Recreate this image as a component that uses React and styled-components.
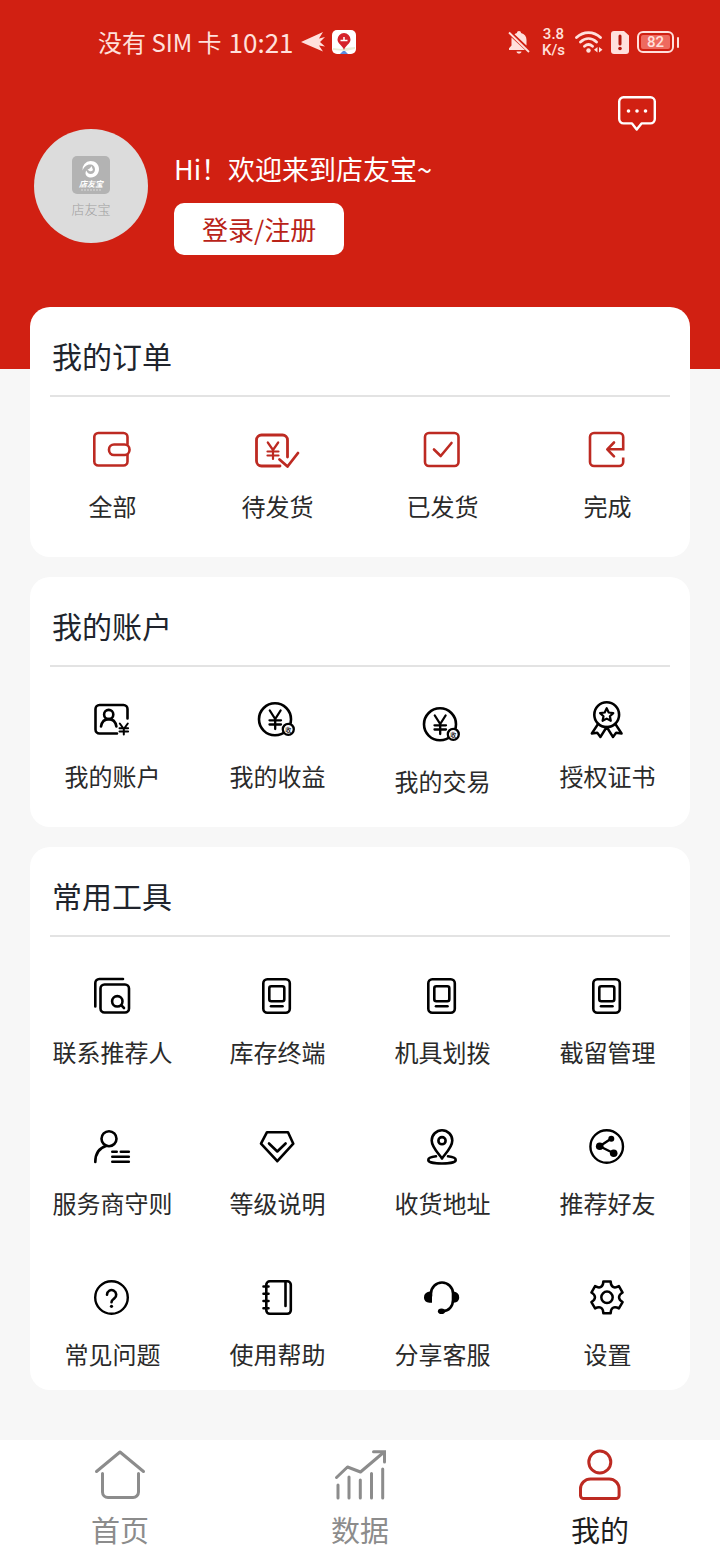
import React, { useState } from "react";
import styled, { createGlobalStyle } from "styled-components";

const GlobalStyle = createGlobalStyle`
  :root {
    --red-color: #d12012;
    --icon-red: #bd2a22;
    --white-color: #ffffff;
    --status-color: #ffe0dc;
    --text-color: #2a2a2a;
    --grey-color: #8c8c8c;
    --line-color: #e3e3e3;
    --page-color: #f7f7f7;
  }

  * {
    box-sizing: border-box;
  }

  body {
    margin: 0;
    background: var(--page-color);
    color: var(--text-color);
    font-family: "Noto Sans CJK SC", "Noto Sans", sans-serif;
  }

  button {
    border: none;
    background: none;
    padding: 0;
    color: inherit;
    font: inherit;
    cursor: pointer;
  }
`;

// item icons, all drawn on the same 45px board
const Icon = ({ children, height = 45, color = "#000", width = 2.6 }) => (
  <svg
    width="45"
    height={height}
    viewBox={`0 ${45 - height} 45 ${height}`}
    fill="none"
    stroke={color}
    strokeWidth={width}
    strokeLinecap="round"
    strokeLinejoin="round"
    aria-hidden="true"
  >
    {children}
  </svg>
);

const RED = "var(--icon-red)";

const WalletIcon = () => (
  <Icon color={RED}>
    <path d="M37.5 16V9a4 4 0 0 0-4-4H8.300a4 4 0 0 0-4 4v24.500a4 4 0 0 0 4 4h25.200a4 4 0 0 0 4-4V27" />
    <rect x="19" y="16.500" width="20.500" height="10.500" rx="5" />
  </Icon>
);

const PendingIcon = () => (
  <Icon color={RED} width={2.8}>
    <path d="M32.5 29V12a5 5 0 0 0-5-5h-21a5 5 0 0 0-5 5v21a5 5 0 0 0 5 5H25" />
    <path d="M24.5 31.500l8 7L43 25" />
    <path d="M12.8 14.500l5.200 7.500 5.200-7.500M18 22v9M12.500 23.500h11M12.500 27.500h11" strokeWidth="2.200" />
  </Icon>
);

const ShippedIcon = () => (
  <Icon color={RED}>
    <rect x="5" y="5" width="33.500" height="33" rx="4" />
    <path d="M14 21.500l6.700 6.500L31.500 15" />
  </Icon>
);

const DoneIcon = () => (
  <Icon color={RED}>
    <path
      d="M22 21.300h16.200V9a4 4 0 0 0-4-4H9a4 4 0 0 0-4 4v25a4 4 0 0 0 4 4h25.200a4 4 0 0 0 4-4v-4.500"
      strokeLinecap="butt"
      strokeLinejoin="miter"
    />
    <path d="M29 14.500l-6.700 6.800 6.700 7" />
  </Icon>
);

const AccountIcon = () => (
  <Icon>
    <path d="M37.500 20.500V11a4 4 0 0 0-4-4h-24a4 4 0 0 0-4 4v20.500a4 4 0 0 0 4 4H27" />
    <circle cx="18.700" cy="16.500" r="4.600" />
    <path d="M11 28.500c.8-4.500 3.500-7.400 7.700-7.400s6.900 2.900 7.700 7.400" />
    <path d="M29.800 25.500l4 5.500 4-5.500M33.800 31v5.500M29.500 30.200h8.600M29.500 33.400h8.600" strokeWidth="2" />
  </Icon>
);

const CoinIcon = ({ height }) => (
  <Icon height={height}>
    <circle cx="20" cy="21.300" r="16" />
    <path d="M14.800 12.500l5.400 8.500 5.400-8.500M20.200 21v10M14.500 22.300h11.500M14.500 26.500h11.500" strokeWidth="2.300" />
    <circle cx="33.300" cy="31.300" r="5.500" fill="#fff" strokeWidth="2.300" />
    <text
      x="33.300"
      y="33.500"
      textAnchor="middle"
      fontSize="6"
      fontWeight="500"
      fill="#000"
      stroke="none"
    >
      收
    </text>
  </Icon>
);

const CertificateIcon = () => (
  <Icon>
    <circle cx="21.700" cy="16.700" r="12.400" />
    <path
      d="M21.700 10.200l2 4.300 4.600.6-3.400 3.200.9 4.500-4.100-2.200-4.100 2.200.9-4.500-3.400-3.200 4.600-.6z"
      strokeWidth="2.200"
    />
    <path d="M12.700 26.500l-5.900 9 5.500-.7 3.100 4.200 6.300-10 6.300 10 3.100-4.200 5.500.7-5.900-9" strokeWidth="2.400" />
  </Icon>
);

const ReferrerIcon = () => (
  <Icon>
    <path d="M5.300 32.500V9a4 4 0 0 1 4-4H33" />
    <rect x="10.500" y="10.500" width="28.500" height="28" rx="4" />
    <circle cx="27.300" cy="27.300" r="5.200" />
    <path d="M31.200 31.200l2.800 2.800" />
  </Icon>
);

const TerminalIcon = () => (
  <Icon>
    <rect x="8.300" y="5.300" width="26.500" height="33.500" rx="4" />
    <rect x="14.300" y="12.300" width="15" height="15" rx="2" />
    <path d="M16 32.200h11.500" />
  </Icon>
);

const RulesIcon = () => (
  <Icon>
    <circle cx="19" cy="13.700" r="7.500" />
    <path d="M16 21C9.500 23 5.300 28.500 5.300 37" />
    <path d="M22.300 26.700h4.400M30.800 26.700h8M22.300 31.700h16.500M22.300 36.700h16.500" />
  </Icon>
);

const LevelIcon = () => (
  <Icon>
    <path d="M12 7.200h21l5.300 11.500L22.300 36.200 6 18.700z" />
    <path d="M14 18.500l8.300 8 8.300-8" />
  </Icon>
);

const AddressIcon = () => (
  <Icon>
    <path d="M22 33.500c-2-3.500-10.300-10.800-10.300-18a10.300 10.300 0 0 1 20.600 0c0 7.200-8.300 14.500-10.300 18z" />
    <circle cx="22" cy="15.700" r="3.600" />
    <path d="M16 31.300c-4.500.5-7.700 1.800-7.700 3.600 0 2.200 6 3.600 13.700 3.600s13.700-1.400 13.700-3.600c0-1.800-3.200-3.100-7.700-3.600" />
  </Icon>
);

const ShareIcon = () => (
  <Icon width={2.4}>
    <circle cx="21.700" cy="21.500" r="16.300" />
    <path d="M26 13.700L14.700 21.300l14 7" />
    <g fill="#000" stroke="none">
      <circle cx="26.300" cy="13.700" r="3" />
      <circle cx="14.700" cy="21.300" r="3.800" />
      <circle cx="28.700" cy="28.300" r="3.800" />
    </g>
  </Icon>
);

const QuestionIcon = () => (
  <Icon width={2.4}>
    <circle cx="21.500" cy="21.500" r="16.300" />
    <path d="M17 18.700a4.600 4.600 0 1 1 7.300 3.700c-1.600 1.200-2.800 1.900-2.800 3.800" strokeWidth="2.600" />
    <circle cx="21.500" cy="30.300" r="1.600" fill="#000" stroke="none" />
  </Icon>
);

const ManualIcon = () => (
  <Icon>
    <rect x="11.300" y="5.300" width="24.500" height="32.500" rx="3.500" />
    <path d="M30.500 6v24M8.500 10.500h5M8.500 17.700h5M8.500 25h5M8.500 32.300h5" />
  </Icon>
);

const ServiceIcon = () => (
  <Icon>
    <path d="M11 20V17.500a11 11 0 0 1 22 0V24c0 6-4 11-10.500 11.300" />
    <path
      d="M12 15.500v11.200H9.500C6 26.700 4 24.500 4 21.300s2-5.300 5.500-5.800zM32 15.500v11.200h1.800c3.500 0 5.400-2.200 5.400-5.400s-1.900-5.300-5.400-5.800z"
      fill="#000"
      stroke="none"
    />
    <ellipse cx="21.500" cy="35.300" rx="3.600" ry="2.800" fill="#000" stroke="none" />
  </Icon>
);

// point on the gear outline, angle in degrees
const gearPoint = (angle, radius) => {
  const rad = (angle * Math.PI) / 180;
  return `${(22 + radius * Math.cos(rad)).toFixed(2)} ${(21.3 + radius * Math.sin(rad)).toFixed(2)}`;
};

const gearPath =
  [0, 1, 2, 3, 4, 5]
    .map((i) => {
      const a = i * 60 - 90;
      return `${i === 0 ? "M" : "L"}${gearPoint(a - 13, 16.3)} L${gearPoint(a + 13, 16.3)} C${gearPoint(
        a + 20,
        11
      )} ${gearPoint(a + 40, 11)} ${gearPoint(a + 47, 16.3)}`;
    })
    .join(" ") + "Z";

const SettingsIcon = () => (
  <Icon width={2.5}>
    <path d={gearPath} />
    <circle cx="22" cy="21.300" r="5.700" />
  </Icon>
);

const NavIcon = ({ children }) => (
  <svg
    width="54"
    height="54"
    viewBox="0 0 54 54"
    fill="none"
    stroke="currentColor"
    strokeWidth="3"
    strokeLinecap="round"
    strokeLinejoin="round"
    aria-hidden="true"
  >
    {children}
  </svg>
);

const HomeIcon = () => (
  <NavIcon>
    <path d="M3.500 23.500L27 4l23.500 19.500" />
    <path d="M9.500 25.500V44a5.500 5.500 0 0 0 5.500 5.500h25a5.500 5.500 0 0 0 5.500-5.500V25.500" />
  </NavIcon>
);

const DataIcon = () => (
  <NavIcon>
    <path d="M3.500 29.500L14.500 19l13 5L50.500 4.500" />
    <path d="M40.500 3.800h11V14" strokeLinejoin="miter" />
    <path d="M5 37v13M16 29v21M27.300 32v18M38.500 25.500V50M49.700 21v29" />
  </NavIcon>
);

const MineIcon = () => (
  <NavIcon>
    <circle cx="26.800" cy="14" r="11" />
    <path d="M17.500 31h18.600a10 10 0 0 1 10 10v6.500a3 3 0 0 1-3 3H10.500a3 3 0 0 1-3-3V41a10 10 0 0 1 10-10z" />
  </NavIcon>
);

const orders = [
  { label: "全部", icon: <WalletIcon /> },
  { label: "待发货", icon: <PendingIcon /> },
  { label: "已发货", icon: <ShippedIcon /> },
  { label: "完成", icon: <DoneIcon /> },
];

const account = [
  { label: "我的账户", icon: <AccountIcon /> },
  { label: "我的收益", icon: <CoinIcon /> },
  { label: "我的交易", icon: <CoinIcon height={50} /> },
  { label: "授权证书", icon: <CertificateIcon /> },
];

const tools = [
  { label: "联系推荐人", icon: <ReferrerIcon /> },
  { label: "库存终端", icon: <TerminalIcon /> },
  { label: "机具划拨", icon: <TerminalIcon /> },
  { label: "截留管理", icon: <TerminalIcon /> },
  { label: "服务商守则", icon: <RulesIcon /> },
  { label: "等级说明", icon: <LevelIcon /> },
  { label: "收货地址", icon: <AddressIcon /> },
  { label: "推荐好友", icon: <ShareIcon /> },
  { label: "常见问题", icon: <QuestionIcon /> },
  { label: "使用帮助", icon: <ManualIcon /> },
  { label: "分享客服", icon: <ServiceIcon /> },
  { label: "设置", icon: <SettingsIcon /> },
];

const tabs = [
  { id: "home", label: "首页", icon: <HomeIcon /> },
  { id: "data", label: "数据", icon: <DataIcon /> },
  { id: "mine", label: "我的", icon: <MineIcon /> },
];

const StatusBar = () => (
  <StatusStyles>
    <div className="left">
      <span>没有 SIM 卡</span>
      <time>10:21</time>
      <svg width="24" height="20" viewBox="0 0 24 20" fill="currentColor" aria-hidden="true">
        <path d="M0 10L22 0l-4 6.500L24 5l-5 5 5 4.500-6-1 4 6z" />
      </svg>
      <svg width="24" height="24" viewBox="0 0 24 24" aria-hidden="true">
        <rect width="24" height="24" rx="5" fill="#fff" />
        <path d="M1 18l8 1 4-1 10-1v2l-9 2-13-1z" fill="#e9edd8" />
        <path d="M12 3a6.500 6.500 0 0 0-6.500 6.500C5.500 14 10.500 15 12 20c1.500-5 6.500-6 6.500-10.500A6.500 6.500 0 0 0 12 3z" fill="#d5232b" />
        <path d="M8.500 10.500h7M12 7v3.500" stroke="#fff" strokeWidth="1.500" />
        <path d="M8 24l3-3h2l3 3z" fill="#5a8de0" />
      </svg>
    </div>
    <div className="right">
      <svg width="22" height="24" viewBox="0 0 22 24" fill="currentColor" aria-hidden="true">
        <path d="M3.500 7.500L17 20H1v-1.800l2.500-2.700zM6.500 4.200C7.300 3.500 8 3.200 9 3c0-1.300.7-2 2-2s2 .7 2 2c3.700.9 5.500 3.500 5.500 7v5.500z" />
        <path d="M8.500 21.500h5c-.3 1.400-1.200 2-2.500 2s-2.200-.6-2.500-2z" />
        <path d="M1 2.500l20 19.500" stroke="currentColor" strokeWidth="1.800" />
      </svg>
      <div className="speed">
        <span>3.8</span>
        <span>K/s</span>
      </div>
      <svg
        width="28"
        height="24"
        viewBox="0 0 28 24"
        fill="none"
        stroke="currentColor"
        strokeWidth="2.800"
        strokeLinecap="round"
        aria-hidden="true"
      >
        <path d="M1.500 7.500c7-6.500 17-6.500 24 0M5.500 12c5-4.500 11-4.500 16 0M9.500 16.300c2.500-2.200 5.500-2.200 8 0" />
        <circle cx="13.500" cy="20.500" r="2.200" fill="currentColor" stroke="none" />
        <path d="M22.500 17v5.500L19 19.800zM24 17v5.500l3.500-2.700z" fill="currentColor" stroke="none" />
      </svg>
      <svg width="18" height="23" viewBox="0 0 18 23" aria-hidden="true">
        <path d="M3 0h10l5 4.500V20a3 3 0 0 1-3 3H3a3 3 0 0 1-3-3V3a3 3 0 0 1 3-3z" fill="currentColor" />
        <path d="M9 5v8" stroke="#b3180d" strokeWidth="3" strokeLinecap="round" />
        <circle cx="9" cy="17.500" r="1.800" fill="#b3180d" />
      </svg>
      <div className="battery">
        <span>82</span>
      </div>
    </div>
  </StatusStyles>
);

const Avatar = () => (
  <AvatarStyles>
    <svg width="38" height="38" viewBox="0 0 38 38" aria-hidden="true">
      <rect width="38" height="38" rx="5" fill="#b3b3b3" />
      <path
        d="M10.500 14.500A8.500 8.500 0 0 1 18.500 5c5 0 8.500 3.500 8.500 8s-3.500 8.500-8 8.500c-3.500 0-5.500-2-5.500-4.500 0-1 .3-1.800.8-2.500 1 2.500 2.500 3.500 4.200 3.500 2.700 0 4.500-2 4.500-4.500 0-3-2-5-5-5-3.500 0-6 2.500-7.500 6z"
        fill="#fff"
      />
      <path d="M15.500 13.500c2-.5 3-1.500 4-3.500l1.500 4c-1.500 1.800-3.500 1.800-5.500-.5z" fill="#fff" />
      <text x="19" y="31" textAnchor="middle" fontSize="8" fontWeight="700" fontStyle="italic" fill="#fff">
        店友宝
      </text>
      <path d="M9 34h21" stroke="#dcdcdc" strokeWidth="1" strokeDasharray="2 1" />
    </svg>
    <span>店友宝</span>
  </AvatarStyles>
);

const Section = ({ title, items, roomy }) => (
  <Card>
    <h2>{title}</h2>
    <Grid $roomy={roomy}>
      {items.map((item) => (
        <li key={item.label}>
          <button>
            {item.icon}
            <span>{item.label}</span>
          </button>
        </li>
      ))}
    </Grid>
  </Card>
);

const App = () => {
  const [active, setActive] = useState("mine");

  return (
    <>
      <GlobalStyle />
      <Page>
        <Header>
          <StatusBar />
          <Profile>
            <Avatar />
            <div className="welcome">
              <p>Hi！欢迎来到店友宝~</p>
              <LoginButton>登录/注册</LoginButton>
            </div>
            <button className="message" aria-label="消息">
              <svg
                width="40"
                height="38"
                viewBox="0 0 40 38"
                fill="none"
                stroke="#fff"
                strokeWidth="2.400"
                strokeLinejoin="round"
              >
                <path d="M6.500 3.300h27a4.300 4.300 0 0 1 4.300 4.300v17.500a4.300 4.300 0 0 1-4.300 4.300h-9L19.700 35.500 15 29.400H6.500a4.300 4.300 0 0 1-4.300-4.300V7.600a4.300 4.300 0 0 1 4.300-4.300z" />
                <g fill="#fff" stroke="none">
                  <circle cx="11.500" cy="17" r="1.800" />
                  <circle cx="20" cy="17" r="1.800" />
                  <circle cx="28.500" cy="17" r="1.800" />
                </g>
              </svg>
            </button>
          </Profile>
        </Header>
        <Content>
          <Section title="我的订单" items={orders} />
          <Section title="我的账户" items={account} />
          <Section title="常用工具" items={tools} roomy />
        </Content>
        <TabBar>
          {tabs.map((tab) => (
            <TabLink
              key={tab.id}
              href={`#${tab.id}`}
              $active={tab.id === active}
              onClick={() => setActive(tab.id)}
            >
              {tab.icon}
              <span>{tab.label}</span>
            </TabLink>
          ))}
        </TabBar>
      </Page>
    </>
  );
};

export default App;

const Page = styled.div`
  display: flex;
  flex-direction: column;
  min-height: 100vh;
`;

const Header = styled.header`
  padding-bottom: 114px;
  background: var(--red-color);
  color: var(--white-color);
`;

const StatusStyles = styled.div`
  display: flex;
  align-items: center;
  justify-content: space-between;
  height: 84px;
  padding: 0 41px 0 98px;
  color: var(--status-color);

  .left {
    display: flex;
    align-items: center;
    gap: 7px;
    font-size: 24px;
    line-height: 36px;

    time {
      font-size: 26px;
    }
  }

  .right {
    display: flex;
    align-items: center;
    gap: 8px;
    font-family: Roboto, sans-serif;
  }

  .speed {
    display: flex;
    flex-direction: column;
    align-items: center;
    margin: 0 2px 0 4px;
    font-size: 15px;
    font-weight: 500;
    line-height: 16px;
  }

  .battery {
    display: flex;
    align-items: center;

    span {
      width: 37px;
      height: 22px;
      padding: 2px;
      border: 2px solid var(--status-color);
      border-radius: 6px;
      background: #ee6a5f;
      background-clip: content-box;
      font-size: 15px;
      font-weight: 500;
      line-height: 15px;
      text-align: center;
    }

    &::after {
      content: "";
      width: 2px;
      height: 11px;
      margin-left: 3px;
      border-radius: 1px;
      background: var(--status-color);
    }
  }
`;

const Profile = styled.div`
  display: flex;
  align-items: flex-start;
  padding: 10px 63px 0 34px;

  .welcome {
    flex: 1;
    margin-left: 26px;
    padding-top: 55px;

    p {
      margin: 0 0 14px;
      font-size: 27px;
      line-height: 40px;
    }
  }

  .message svg {
    display: block;
  }
`;

const AvatarStyles = styled.div`
  display: flex;
  flex-direction: column;
  align-items: center;
  width: 114px;
  height: 114px;
  margin-top: 35px;
  padding-top: 27px;
  border-radius: 50%;
  background: #dcdcdc;
  color: #a0a0a0;

  span {
    margin-top: 5px;
    font-size: 13px;
    font-weight: 300;
    line-height: 20px;
  }
`;

const LoginButton = styled.button`
  && {
    display: block;
    padding: 0 28px;
    border-radius: 10px;
    background: var(--white-color);
    color: #b92318;
    font-size: 26px;
    line-height: 52px;
  }
`;

const Content = styled.main`
  display: flex;
  flex-direction: column;
  gap: 20px;
  margin-top: -62px;
  padding: 0 30px 50px;
`;

const Card = styled.section`
  border-radius: 20px;
  background: var(--white-color);

  h2 {
    margin: 0 20px;
    padding: 26px 2px 18px;
    border-bottom: 2px solid var(--line-color);
    color: #20242c;
    font-size: 30px;
    font-weight: 400;
    line-height: 44px;
  }
`;

const Grid = styled.ul`
  display: grid;
  grid-template-columns: repeat(4, 1fr);
  grid-auto-rows: minmax(${(props) => (props.$roomy ? 151 : 160)}px, auto);
  margin: 0;
  padding: 0;
  list-style: none;

  button {
    display: flex;
    flex-direction: column;
    align-items: center;
    gap: 16px;
    width: 100%;
    padding-top: ${(props) => (props.$roomy ? 37 : 31)}px;
    font-size: 24px;
    line-height: 34px;
    white-space: nowrap;
  }
`;

const TabBar = styled.nav`
  display: flex;
  margin-top: auto;
  padding: 8px 0;
  background: var(--white-color);
`;

const TabLink = styled.a`
  flex: 1;
  display: flex;
  flex-direction: column;
  align-items: center;
  gap: 4px;
  color: ${(props) => (props.$active ? "var(--icon-red)" : "var(--grey-color)")};
  font-size: 29px;
  line-height: 46px;
  text-decoration: none;

  span {
    color: ${(props) => (props.$active ? "#1e1e1e" : "inherit")};
  }
`;
